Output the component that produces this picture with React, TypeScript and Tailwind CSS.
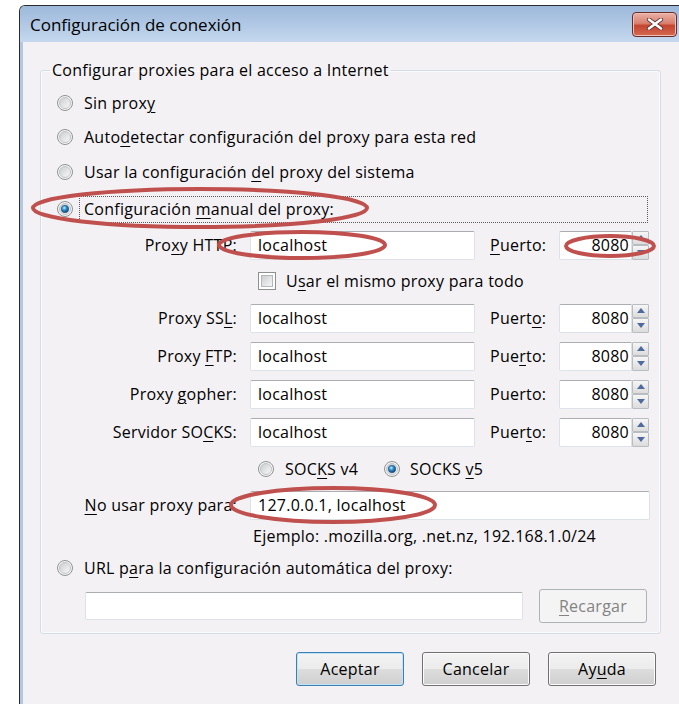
import type { ReactNode } from 'react';

function U({ children }: { children: ReactNode }) {
  return <span className="underline decoration-1 underline-offset-[3px]">{children}</span>;
}

function Radio({ checked = false }: { checked?: boolean }) {
  return (
    <svg width="16" height="16" viewBox="0 0 16 16" className="shrink-0">
      <defs>
        <linearGradient id="radio-face" x1="0" y1="0" x2="1" y2="1">
          <stop offset="0" stopColor="#c9cbce" />
          <stop offset="1" stopColor="#fbfbfb" />
        </linearGradient>
        <radialGradient id="radio-dot" cx="0.4" cy="0.35" r="0.7">
          <stop offset="0" stopColor="#c6ecfd" />
          <stop offset="0.45" stopColor="#2a8bcb" />
          <stop offset="1" stopColor="#0b3b69" />
        </radialGradient>
      </defs>
      <circle cx="8" cy="8" r="7.5" fill="#f7f7f7" stroke="#8e9092" />
      <circle cx="8" cy="8" r="5.5" fill="url(#radio-face)" stroke="#c0c3c6" />
      {checked && <circle cx="8" cy="8" r="3.7" fill="url(#radio-dot)" stroke="#1d4f7c" strokeWidth="0.6" />}
    </svg>
  );
}

function Checkbox() {
  return (
    <div className="w-[18px] h-[18px] shrink-0 border border-[#8e8f8f] bg-white p-[2px]">
      <div className="w-full h-full border border-[#b4b8bd] bg-gradient-to-br from-[#cbced2] to-[#f6f6f6]" />
    </div>
  );
}

function TextBox({ value = '', width }: { value?: string; width: string }) {
  return (
    <div
      className={`${width} h-[29px] flex items-center bg-white rounded-[2px] border border-[#dde2e8] border-t-[#abadb3] px-[7px] text-black`}
    >
      {value}
    </div>
  );
}

function SpinButton({ up = false }: { up?: boolean }) {
  return (
    <div className="flex-1 flex items-center justify-center border border-[#b9bcc0] rounded-[1px] bg-gradient-to-b from-[#f6f6f6] to-[#dcdcdc]">
      <svg width="8" height="5" viewBox="0 0 8 5">
        {up ? <path d="M0 5 L4 0 L8 5 Z" fill="#4f6a9e" /> : <path d="M0 0 L4 5 L8 0 Z" fill="#4f6a9e" />}
      </svg>
    </div>
  );
}

function PortField() {
  return (
    <div className="flex h-[29px]">
      <div className="w-[73px] flex items-center justify-end pr-[2px] bg-white rounded-l-[2px] border border-[#dde2e8] border-t-[#abadb3]">
        8080
      </div>
      <div className="w-[17px] flex flex-col">
        <SpinButton up />
        <SpinButton />
      </div>
    </div>
  );
}

function ProxyRow({ label, port }: { label: ReactNode; port: ReactNode }) {
  return (
    <div className="h-[38px] flex items-center">
      <div className="w-[196px] text-right">{label}</div>
      <div className="ml-[13px]">
        <TextBox value="localhost" width="w-[225px]" />
      </div>
      <div className="w-[69px] ml-[15px]">{port}</div>
      <PortField />
    </div>
  );
}

function Button({ children, primary = false }: { children: ReactNode; primary?: boolean }) {
  return (
    <button
      className={`w-[108px] h-[34px] rounded-[3px] border text-black bg-[linear-gradient(#f3f3f3_0%,#ebebeb_50%,#dddddd_50%,#cfcfcf_100%)] ${
        primary ? 'border-[#3c7fb1] shadow-[inset_0_0_0_1px_#bfe4f8]' : 'border-[#707070] shadow-[inset_0_0_0_1px_#fcfcfc]'
      }`}
    >
      {children}
    </button>
  );
}

export default function App() {
  return (
    <div className="relative w-[679px] h-[704px] overflow-hidden bg-white pt-[5px] pl-[19px] text-[16px] tracking-[0.25px] text-black font-['Open_Sans','Noto_Sans',sans-serif]">
      <div className="w-[662px] h-[720px] flex flex-col border-l border-t border-[#2b2b2b] rounded-tl-[6px] overflow-hidden">
        {/* title bar */}
        <div className="h-[36px] shrink-0 flex items-center justify-between pl-[10px] pr-[4px] bg-gradient-to-b from-[#9cb8da] to-[#c5d8ee]">
          <span className="text-[17px] tracking-normal leading-none">Configuración de conexión</span>
          <div className="w-[45px] h-[25px] rounded-[4px] border border-[#6b2b2b] flex items-center justify-center bg-[linear-gradient(#e9b1a6_0%,#d9806f_45%,#c4442f_55%,#d56a52_100%)] shadow-[inset_0_0_0_1px_#eec0b4]">
            <svg width="18" height="12" viewBox="0 0 18 12">
              <path d="M3 1.5 L15 10.5 M15 1.5 L3 10.5" stroke="#5a3434" strokeWidth="4.2" strokeLinecap="round" />
              <path d="M3 1.5 L15 10.5 M15 1.5 L3 10.5" stroke="#ffffff" strokeWidth="2.6" strokeLinecap="round" />
            </svg>
          </div>
        </div>

        <div className="flex-1 flex">
          <div className="w-[3px] bg-[#b2c7e1]" />
          <div className="flex-1 bg-[#f4f1f5] pl-[17px] pt-[18px]">
            <fieldset className="w-[621px] border border-[#d3dde6] rounded-[3px] pt-[6px] pb-[9px] shadow-[inset_0_0_0_1px_#fbfbfd]">
              <legend className="ml-[9px] px-[2px] leading-[20px]">Configurar proxies para el acceso a Internet</legend>

              <div className="h-[34px] flex items-center pl-[16px] gap-[6px]">
                <Radio />
                <span className="pl-[5px]">
                  Sin prox<U>y</U>
                </span>
              </div>
              <div className="h-[34px] flex items-center pl-[16px] gap-[6px]">
                <Radio />
                <span className="pl-[5px]">
                  Auto<U>d</U>etectar configuración del proxy para esta red
                </span>
              </div>
              <div className="h-[36px] flex items-center pl-[16px] gap-[6px]">
                <Radio />
                <span className="pl-[5px]">
                  Usar la configuración <U>d</U>el proxy del sistema
                </span>
              </div>
              <div className="h-[38px] flex items-center pl-[16px] pr-[12px] gap-[6px]">
                <Radio checked />
                <div className="flex-1 h-[27px] flex items-center pl-[4px] border border-dotted border-[#5a5a5a]">
                  <span>
                    Configuración <U>m</U>anual del proxy:
                  </span>
                </div>
              </div>

              <div className="h-[34px] flex items-center">
                <div className="w-[196px] text-right">
                  Pro<U>x</U>y HTTP:
                </div>
                <div className="ml-[13px]">
                  <TextBox value="localhost" width="w-[225px]" />
                </div>
                <div className="w-[69px] ml-[15px]">
                  <U>P</U>uerto:
                </div>
                <PortField />
              </div>

              <div className="h-[37px] flex items-center pl-[217px] gap-[10px]">
                <Checkbox />
                <span>
                  U<U>s</U>ar el mismo proxy para todo
                </span>
              </div>

              <ProxyRow label={<>Proxy SS<U>L</U>:</>} port={<>Puert<U>o</U>:</>} />
              <ProxyRow label={<>Proxy <U>F</U>TP:</>} port={<>Pue<U>r</U>to:</>} />
              <ProxyRow label={<>Proxy <U>g</U>opher:</>} port={<>Puerto:</>} />
              <ProxyRow label={<>Servidor SO<U>C</U>KS:</>} port={<>Puer<U>t</U>o:</>} />

              <div className="h-[36px] flex items-center pl-[217px]">
                <Radio />
                <span className="ml-[11px] w-[88px]">
                  SOC<U>K</U>S v4
                </span>
                <div className="ml-[11px]">
                  <Radio checked />
                </div>
                <span className="ml-[10px]">
                  SOCKS <U>v</U>5
                </span>
              </div>

              <div className="h-[36px] flex items-center">
                <div className="w-[196px] text-right">
                  <U>N</U>o usar proxy para:
                </div>
                <div className="ml-[13px]">
                  <TextBox value="127.0.0.1, localhost" width="w-[400px]" />
                </div>
              </div>

              <div className="h-[26px] flex items-center pl-[212px]">Ejemplo: .mozilla.org, .net.nz, 192.168.1.0/24</div>

              <div className="h-[38px] flex items-center pl-[16px] gap-[6px]">
                <Radio />
                <span className="pl-[5px]">
                  URL p<U>a</U>ra la configuración automática del proxy:
                </span>
              </div>

              <div className="h-[37px] flex items-center pl-[44px] gap-[16px]">
                <div className="w-[438px] h-[28px] bg-white rounded-[2px] border border-[#dde2e8] border-t-[#abadb3]" />
                <button className="w-[108px] h-[34px] rounded-[3px] border border-[#adb2b5] bg-[#f4f4f4] text-[#838383]">
                  <U>R</U>ecargar
                </button>
              </div>
            </fieldset>

            <div className="flex mt-[18px] ml-[256px] gap-[18px]">
              <Button primary>Aceptar</Button>
              <Button>Cancelar</Button>
              <Button>
                Ay<U>u</U>da
              </Button>
            </div>
          </div>
        </div>
      </div>

      {/* red annotation rings */}
      <svg className="absolute left-0 top-0 pointer-events-none" width="679" height="704" viewBox="0 0 679 704">
        <g fill="none" stroke="#c0504d" strokeWidth="4">
          <ellipse cx="200" cy="208" rx="167" ry="19" />
          <ellipse cx="302" cy="245" rx="83" ry="13" />
          <ellipse cx="610" cy="246" rx="44" ry="10" />
          <ellipse cx="333" cy="505" rx="102" ry="17" />
        </g>
      </svg>
    </div>
  );
}
